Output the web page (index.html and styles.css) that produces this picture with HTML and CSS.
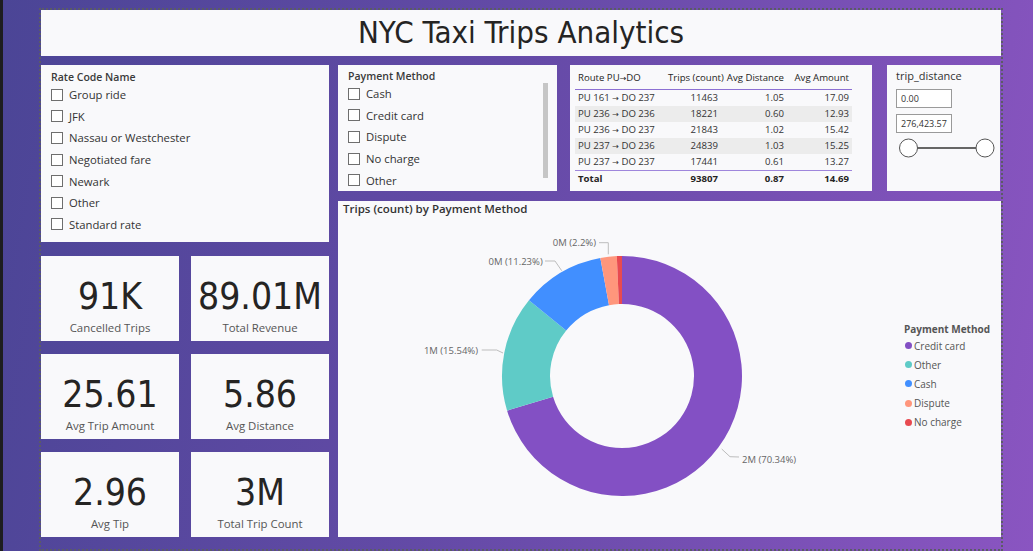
FILE: index.html
```html
<!DOCTYPE html>
<html lang="en">
<head>
<meta charset="utf-8">
<title>NYC Taxi Trips Analytics</title>
<link rel="stylesheet" href="styles.css">
</head>
<body>
<div class="app">
  <div class="strip"></div>
  <div class="stage">
    <div class="canvas">
      <header class="card title-card"><h1>NYC Taxi Trips Analytics</h1></header>
      <div class="main">
        <div class="left-col">
          <section class="card slicer rate">
            <div class="slicer-title">Rate Code Name</div>
            <ul class="items">
              <li><span class="box"></span>Group ride</li>
              <li><span class="box"></span>JFK</li>
              <li><span class="box"></span>Nassau or Westchester</li>
              <li><span class="box"></span>Negotiated fare</li>
              <li><span class="box"></span>Newark</li>
              <li><span class="box"></span>Other</li>
              <li><span class="box"></span>Standard rate</li>
            </ul>
          </section>
          <div class="kpis">
            <div class="card kpi"><div class="num">91K</div><div class="lbl">Cancelled Trips</div></div>
            <div class="card kpi"><div class="num">89.01M</div><div class="lbl">Total Revenue</div></div>
            <div class="card kpi"><div class="num">25.61</div><div class="lbl">Avg Trip Amount</div></div>
            <div class="card kpi"><div class="num">5.86</div><div class="lbl">Avg Distance</div></div>
            <div class="card kpi"><div class="num">2.96</div><div class="lbl">Avg Tip</div></div>
            <div class="card kpi"><div class="num">3M</div><div class="lbl">Total Trip Count</div></div>
          </div>
        </div>
        <div class="right-col">
          <div class="top-row">
            <section class="card slicer pay">
              <div class="slicer-title">Payment Method</div>
              <div class="pay-body">
                <ul class="items">
                  <li><span class="box"></span>Cash</li>
                  <li><span class="box"></span>Credit card</li>
                  <li><span class="box"></span>Dispute</li>
                  <li><span class="box"></span>No charge</li>
                  <li><span class="box"></span>Other</li>
                </ul>
                <div class="scrollbar"></div>
              </div>
            </section>
            <section class="card table-card">
              <div class="grid">
                <div class="c h">Route PU<span class="ar">→</span>DO</div><div class="c h r">Trips (count)</div><div class="c h r">Avg Distance</div><div class="c h r">Avg Amount</div>
                <div class="c">PU 161 <span class="ar">→</span> DO 237</div><div class="c r">11463</div><div class="c r">1.05</div><div class="c r">17.09</div>
                <div class="c alt">PU 236 <span class="ar">→</span> DO 236</div><div class="c r alt">18221</div><div class="c r alt">0.60</div><div class="c r alt">12.93</div>
                <div class="c">PU 236 <span class="ar">→</span> DO 237</div><div class="c r">21843</div><div class="c r">1.02</div><div class="c r">15.42</div>
                <div class="c alt">PU 237 <span class="ar">→</span> DO 236</div><div class="c r alt">24839</div><div class="c r alt">1.03</div><div class="c r alt">15.25</div>
                <div class="c">PU 237 <span class="ar">→</span> DO 237</div><div class="c r">17441</div><div class="c r">0.61</div><div class="c r">13.27</div>
                <div class="c t">Total</div><div class="c r t">93807</div><div class="c r t">0.87</div><div class="c r t">14.69</div>
              </div>
            </section>
            <section class="card range">
              <div class="slicer-title light">trip_distance</div>
              <div class="inp">0.00</div>
              <div class="inp">276,423.57</div>
              <svg class="slider" width="100" height="22" viewBox="0 0 100 22">
                <line x1="20" y1="11" x2="80" y2="11" stroke="#666" stroke-width="2"/>
                <circle cx="11.5" cy="11" r="9" fill="#fff" stroke="#555" stroke-width="1"/>
                <circle cx="88" cy="11" r="9" fill="#fff" stroke="#555" stroke-width="1"/>
              </svg>
            </section>
          </div>
          <section class="card chart">
            <div class="chart-title">Trips (count) by Payment Method</div>
            <div class="chart-body">
              <svg class="donut" width="566" height="314" viewBox="0 0 566 314">
                <g transform="translate(1,0)">
                  <path d="M 283 33 A 120 120 0 1 1 168.11 187.64 L 214.07 173.79 A 72 72 0 1 0 283 81 Z" fill="#8350c4"/>
                  <path d="M 168.11 187.64 A 120 120 0 0 1 189.98 77.18 L 227.19 107.51 A 72 72 0 0 0 214.07 173.79 Z" fill="#5fcbc7"/>
                  <path d="M 189.98 77.18 A 120 120 0 0 1 261.34 34.97 L 270.0 82.18 A 72 72 0 0 0 227.19 107.51 Z" fill="#418fff"/>
                  <path d="M 261.34 34.97 A 120 120 0 0 1 277.81 33.11 L 279.88 81.07 A 72 72 0 0 0 270.0 82.18 Z" fill="#ff967c"/>
                  <path d="M 277.81 33.11 A 120 120 0 0 1 283 33 L 283 81 A 72 72 0 0 0 279.88 81.07 Z" fill="#e84a50"/>
                  <g fill="none" stroke="#bdbdbd" stroke-width="1">
                    <polyline points="382.7,226 391,233.7 400,234"/>
                    <polyline points="142.7,127 157.7,127 164,130"/>
                    <polyline points="206,38 216,38 222.7,47.7"/>
                    <polyline points="260,19.7 269.3,19.7 269.3,31.3"/>
                  </g>
                  <g class="lab">
                    <text x="403" y="239.5">2M (70.34%)</text>
                    <text x="139" y="131" text-anchor="end">1M (15.54%)</text>
                    <text x="203.7" y="41.5" text-anchor="end">0M (11.23%)</text>
                    <text x="257" y="23" text-anchor="end">0M (2.2%)</text>
                  </g>
                </g>
              </svg>
              <div class="legend">
                <div class="legend-title">Payment Method</div>
                <div class="li"><span class="dot" style="background:#8350c4"></span>Credit card</div>
                <div class="li"><span class="dot" style="background:#5fcbc7"></span>Other</div>
                <div class="li"><span class="dot" style="background:#418fff"></span>Cash</div>
                <div class="li"><span class="dot" style="background:#ff967c"></span>Dispute</div>
                <div class="li"><span class="dot" style="background:#e84a50"></span>No charge</div>
              </div>
            </div>
          </section>
        </div>
      </div>
    </div>
  </div>
</div>
</body>
</html>
```
FILE: styles.css
```css
* { box-sizing: border-box; }
html, body { margin: 0; padding: 0; }
body {
  width: 1033px;
  height: 551px;
  overflow: hidden;
  font-family: "Segoe UI", "Open Sans", "Noto Sans", sans-serif;
  color: #252423;
}
.app { display: flex; width: 1033px; height: 551px; }
.strip { width: 3px; background: #1d1d1f; flex: none; }
.stage {
  flex: 1;
  background: linear-gradient(100deg, #4b4596 0%, #634aa6 45%, #8a55c1 100%);
  padding: 8px 0 0 36px;
}
.canvas {
  width: 964px;
  height: 543px;
  border: 2px dotted #5b5b66;
  display: flex;
  flex-direction: column;
}
.card { background: #f9f9fb; }
.title-card { height: 46px; flex: none; }
.title-card h1 {
  margin: 0;
  font-family: "DejaVu Sans Condensed", "DejaVu Sans", sans-serif;
  font-stretch: condensed;
  font-weight: normal;
  font-size: 31px;
  line-height: 44px;
  text-align: center;
  color: #252423;
}
.main { display: flex; gap: 9px; margin-top: 9px; }
.left-col { width: 288px; flex: none; display: flex; flex-direction: column; }
.right-col { width: 663px; flex: none; display: flex; flex-direction: column; }

.slicer { padding: 5px 10px 0 10px; }
.pay { padding-top: 4px; }
.slicer-title {
  font-size: 10.5px;
  line-height: 14px;
  font-weight: 600;
  color: #3a3a3a;
}
.slicer-title.light { font-weight: 400; font-size: 11px; color: #333; }
.items { list-style: none; margin: 0; padding: 0; }
.items li {
  display: flex;
  align-items: center;
  height: 21.6px;
  font-size: 11.3px;
  color: #333;
  white-space: nowrap;
}
.box {
  width: 12px; height: 12px;
  border: 1px solid #6e6e6e;
  background: #fff;
  margin-right: 6px;
  flex: none;
}
.rate { height: 177px; }
.kpis {
  margin-top: 14px;
  display: grid;
  grid-template-columns: 138px 138px;
  grid-auto-rows: 85px;
  column-gap: 12px;
  row-gap: 13px;
}
.kpi {
  display: flex;
  flex-direction: column;
  align-items: center;
  padding-top: 21px;
}
.num {
  font-family: "DejaVu Sans Condensed", "DejaVu Sans", sans-serif;
  font-stretch: condensed;
  font-size: 37px;
  line-height: 40px;
  color: #252423;
}
.lbl {
  margin-top: 3px;
  font-size: 11.4px;
  line-height: 16px;
  color: #555;
}

.top-row { display: flex; height: 126px; }
.pay { width: 219px; }
.pay-body { display: flex; }
.pay-body .items { flex: 1; }
.scrollbar {
  width: 5px;
  height: 95px;
  margin-right: -1px;
  background: #c6c6c6;
}
.table-card { width: 302px; margin-left: 13px; padding: 4px 0 0 5px; }
.grid {
  display: grid;
  grid-template-columns: 90px 56px 66px 65px;
  font-size: 9.6px;
  color: #333;
}
.ar { font-family: "DejaVu Sans", sans-serif; font-size: 8px; }
.c { height: 16px; line-height: 16px; padding: 0 3px; white-space: nowrap; }
.c.r { text-align: right; }
.c.h { height: 21px; line-height: 14px; padding-top: 2px; border-bottom: 1px solid #8c70d3; color: #252423; }
.c.alt { background: #ececec; }
.c.t { height: 17px; border-top: 1px solid #9f86dc; font-weight: 700; color: #252423; }

.range { width: 113px; margin-left: 15px; padding: 4px 0 0 9px; }
.inp {
  width: 56px; height: 19px;
  margin-top: 6px;
  border: 1px solid #9a9a9a;
  background: #fff;
  font-size: 9px;
  line-height: 17px;
  padding-left: 4px;
  color: #333;
}
.inp + .inp { margin-top: 6px; }
.slider { display: block; margin-top: 4px; margin-left: 1px; }

.chart { margin-top: 10px; height: 336px; }
.chart-title {
  height: 22px;
  padding: 1px 5px 0;
  font-size: 11.5px;
  line-height: 14px;
  font-weight: 600;
  color: #333;
}
.chart-body { display: flex; }
.donut { display: block; flex: none; }
.lab text { font-family: "Segoe UI", "Open Sans", sans-serif; font-size: 9.5px; fill: #666; }
.legend { padding-top: 99px; }
.legend-title { font-size: 10px; line-height: 14px; font-weight: 700; color: #555; }
.li {
  display: flex;
  align-items: center;
  height: 19.2px;
  font-size: 10px;
  color: #555;
}
.dot { width: 7px; height: 7px; border-radius: 50%; margin-left: 1px; margin-right: 2px; }
```
